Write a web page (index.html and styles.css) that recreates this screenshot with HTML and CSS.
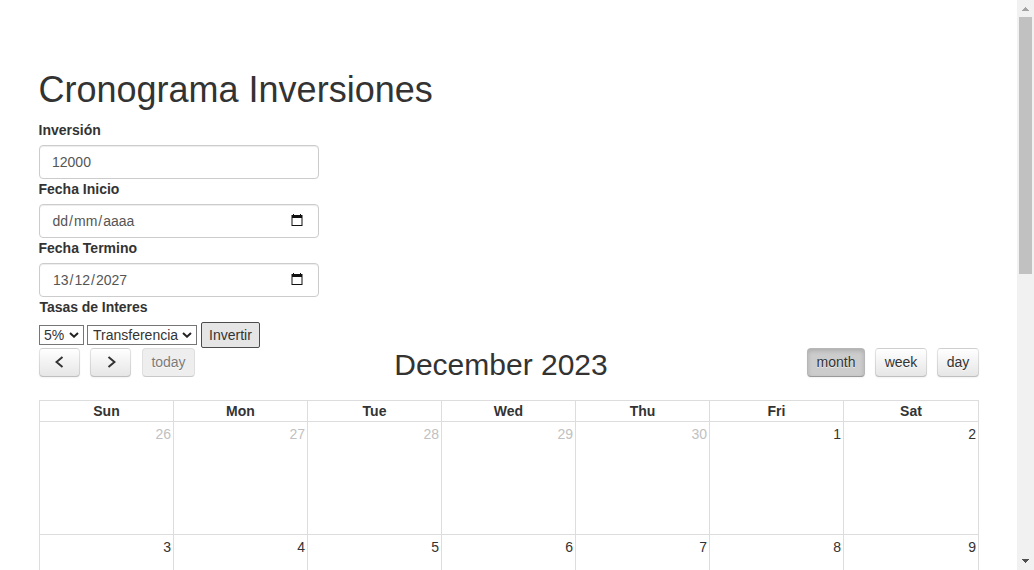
FILE: index.html
```html
<!DOCTYPE html>
<html lang="es">
<head>
<meta charset="utf-8">
<title>Cronograma Inversiones</title>
<link rel="stylesheet" href="styles.css">
</head>
<body>
<div class="window">
  <main class="page">
    <h1 class="title">Cronograma Inversiones</h1>
    <form class="form">
      <label class="label">Inversión</label>
      <div class="field"><span>12000</span></div>
      <label class="label">Fecha Inicio</label>
      <div class="field date empty"><span>dd<i class="sep">/</i>mm<i class="sep">/</i>aaaa</span>
        <svg class="cal-icon" viewBox="0 0 12 12"><path fill="#111" fill-rule="evenodd" d="M2 0h1v1h6V0h1v1h1.500v11H.500V1H2zM1.500 4v7h9V4z"/></svg></div>
      <label class="label">Fecha Termino</label>
      <div class="field date"><span>13<i class="sep">/</i>12<i class="sep">/</i>2027</span>
        <svg class="cal-icon" viewBox="0 0 12 12"><path fill="#111" fill-rule="evenodd" d="M2 0h1v1h6V0h1v1h1.500v11H.500V1H2zM1.500 4v7h9V4z"/></svg></div>
      <label class="label rate-label">Tasas de Interes</label>
      <div class="actions">
        <div class="select rate"><span>5%</span><svg class="chevron" viewBox="0 0 10 6"><path d="M1 1l4 3.700 4-3.700" fill="none" stroke="#222" stroke-width="2"/></svg></div>
        <div class="select method"><span>Transferencia</span><svg class="chevron" viewBox="0 0 10 6"><path d="M1 1l4 3.700 4-3.700" fill="none" stroke="#222" stroke-width="2"/></svg></div>
        <button class="invest" type="button">Invertir</button>
      </div>
    </form>
    <div class="toolbar">
      <div class="group">
        <button class="btn nav"><svg class="arrow" viewBox="0 0 9 12"><path d="M7.500 1L1.500 6l6 5" fill="none" stroke="#333" stroke-width="2"/></svg></button>
        <button class="btn nav next"><svg class="arrow" viewBox="0 0 9 12"><path d="M1.500 1l6 5-6 5" fill="none" stroke="#333" stroke-width="2"/></svg></button>
        <button class="btn today">today</button>
      </div>
      <h2 class="month-title">December 2023</h2>
      <div class="group">
        <button class="btn month active">month</button>
        <button class="btn week">week</button>
        <button class="btn day">day</button>
      </div>
    </div>
    <div class="calendar">
      <div class="row head"><span>Sun</span><span>Mon</span><span>Tue</span><span>Wed</span><span>Thu</span><span>Fri</span><span>Sat</span></div>
      <div class="row days"><span class="other">26</span><span class="other">27</span><span class="other">28</span><span class="other">29</span><span class="other">30</span><span>1</span><span>2</span></div>
      <div class="row days"><span>3</span><span>4</span><span>5</span><span>6</span><span>7</span><span>8</span><span>9</span></div>
    </div>
  </main>
  <div class="scrollbar">
    <svg class="sb-arrow" viewBox="0 0 17 17"><path fill="#a3a3a3" d="M8 7h1v1h1v1h1v1h1v1H5v-1h1V9h1V8h1z"/></svg>
    <div class="thumb"></div>
    <svg class="sb-arrow bottom" viewBox="0 0 17 17"><path fill="#505050" d="M5 6h7v1h-1v1h-1v1H9v1H8V9H7V8H6V7H5z"/></svg>
  </div>
</div>
</body>
</html>
```
FILE: styles.css
```css
* { box-sizing: border-box; }
body {
  margin: 0;
  overflow: hidden;
  background: #fff;
  color: #333;
  font: 14px/20px "Liberation Sans", Arial, sans-serif;
}
.window { display: flex; height: 570px; overflow: hidden; }
.page { width: 1017px; padding: 70px 38px 0 39px; }
.title { margin: 0 0 10px -0.5px; font-size: 36px; font-weight: 400; line-height: 40px; }
.form { display: flex; flex-direction: column; }
.label { height: 20px; margin: 0 0 5px -0.5px; font-weight: 700; }
.field {
  display: flex;
  align-items: center;
  justify-content: space-between;
  width: 280px;
  height: 34px;
  padding: 0 15px 0 12px;
  border: 1px solid #ccc;
  border-radius: 4px;
  box-shadow: inset 0 1px 1px rgba(0, 0, 0, .075);
  color: #555;
}
.date { padding-left: 13px; }
.empty { padding-left: 12.5px; }
.sep { margin: 0 1px; font-style: normal; }
.cal-icon { width: 12px; height: 12px; margin-bottom: 2px; }
.rate-label { margin-left: 0.5px; letter-spacing: -0.05px; }
.actions { display: flex; align-items: center; height: 26px; }
.select {
  display: flex;
  align-items: center;
  justify-content: space-between;
  height: 20px;
  padding: 0 4px;
  border: 1px solid #767676;
}
.rate { width: 45px; margin-right: 3px; }
.method { width: 110px; margin-right: 4px; padding-left: 5px; }
.chevron { width: 10px; height: 6px; }
.invest {
  width: 59px;
  height: 26px;
  padding: 0;
  border: 1px solid #4c4c4c;
  border-radius: 2px;
  background: #e5e5e5;
  color: #333;
  font: inherit;
}
.toolbar { display: flex; justify-content: space-between; height: 52px; }
.group { display: flex; gap: 10px; }
.month-title { margin: 0; font-size: 30px; font-weight: 400; line-height: 33px; }
.btn {
  height: 29px;
  padding: 0 0 1px;
  border: 1px solid;
  border-color: rgba(0, 0, 0, .1) rgba(0, 0, 0, .1) rgba(0, 0, 0, .25);
  border-radius: 4px;
  background: linear-gradient(#fff, #e6e6e6);
  box-shadow: inset 0 1px 0 rgba(255, 255, 255, .2), 0 1px 2px rgba(0, 0, 0, .05);
  color: #333;
  font: inherit;
  line-height: 18px;
  text-shadow: 0 1px 1px rgba(255, 255, 255, .75);
}
.nav { display: flex; align-items: center; justify-content: center; width: 41px; padding-right: 1px; }
.next { padding-left: 2px; }
.arrow { width: 9px; height: 12px; }
.today { width: 53px; margin-left: 1px; background: #e6e6e6; opacity: .65; box-shadow: none; }
.month { width: 58px; }
.week { width: 52px; }
.day { width: 42px; }
.active { background: #ccc; box-shadow: inset 0 2px 4px rgba(0, 0, 0, .15), 0 1px 2px rgba(0, 0, 0, .05); }
.calendar { border: 1px solid #ddd; border-bottom: 0; }
.row { display: grid; grid-template-columns: 133px repeat(5, 134px) 135px; }
.row span + span { border-left: 1px solid #ddd; }
.head { height: 20px; font-weight: 700; text-align: center; }
.days { height: 113px; border-top: 1px solid #ddd; text-align: right; }
.days span { padding: 2px 2px 0 0; }
.days .other { color: #c1c1c1; }
.scrollbar { display: flex; flex-direction: column; width: 17px; height: 570px; background: #f1f1f1; }
.sb-arrow { width: 17px; height: 17px; }
.thumb { width: 13px; height: 257px; margin: 0 2px; background: #c1c1c1; }
.bottom { margin-top: auto; }
```
